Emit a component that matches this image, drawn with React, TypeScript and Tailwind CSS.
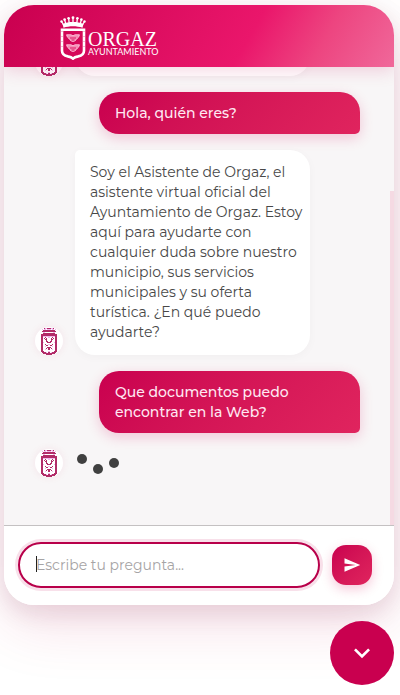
import type { ReactNode } from "react";

const AVATAR_ROWS = [
  "...#oo####oo#...",
  ".o.oo.oooo.oo.o.",
  "..############..",
  ".##############.",
  "..oo........oo..",
  "..############..",
  "################",
  "################",
  "##oooooooooooo##",
  "##..#..oo..#..##",
  "##.#.#....#.#.##",
  "##..##....##..##",
  "##...#....#...##",
  "##...##..##...##",
  "##o...####...o##",
  "##............##",
  "##..#..oo..#..##",
  "##...##..##...##",
  "##..o......o..##",
  "##....####....##",
  "##...#.##.#...##",
  "##..o..##..o..##",
  "##............##",
  "###....oo....###",
  ".####o.##.o####.",
  "..############..",
  ".....######.....",
];

function Avatar() {
  return (
    <div className="flex size-7 shrink-0 items-center justify-center rounded-full bg-white shadow-[0_0_8px_rgba(200,0,80,0.08)]">
      <svg width="16" height="27" viewBox="0 0 16 27" shapeRendering="crispEdges" role="img" aria-label="Asistente">
        {AVATAR_ROWS.flatMap((row, y) =>
          row.split("").map((c, x) =>
            c === "." ? null : (
              <rect key={`${x}-${y}`} x={x} y={y} width="1" height="1" fill={c === "#" ? "#b22c68" : "#f2b9ec"} />
            ),
          ),
        )}
      </svg>
    </div>
  );
}

function UserMessage({ children }: { children: ReactNode }) {
  return (
    <p className="ml-[68px] rounded-[20px] rounded-br-[5px] bg-linear-135 from-[#c9004f] to-[#e0245e] px-4 py-[11px] font-medium text-[#ffe8f2] shadow-[0_4px_14px_rgba(214,0,84,0.2)]">
      {children}
    </p>
  );
}

function BotMessage({ children }: { children?: ReactNode }) {
  return (
    <div className="flex items-end gap-3 pl-1">
      <Avatar />
      <p className="min-h-11 w-[235px] rounded-[20px] rounded-tl-[5px] bg-white pt-3 pr-1 pb-[13px] pl-[15px] text-[#484848] shadow-[0_2px_10px_rgba(0,0,0,0.03)]">
        {children}
      </p>
    </div>
  );
}

function Crest() {
  return (
    <svg width="26" height="44" viewBox="0 0 26 44" fill="none" aria-hidden="true">
      <g fill="#fff">
        <circle cx="1.5" cy="5.5" r="1.2" />
        <circle cx="4.6" cy="3.6" r="1.3" />
        <circle cx="8.6" cy="2.3" r="1.3" />
        <circle cx="13" cy="1.7" r="1.4" />
        <circle cx="17.4" cy="2.3" r="1.3" />
        <circle cx="21.4" cy="3.6" r="1.3" />
        <circle cx="24.5" cy="5.5" r="1.2" />
        <path d="M2.5 8c6.500-2.600 14.500-2.600 21 0l-1 3.800c-6-2-13-2-19 0z" />
      </g>
      <path
        d="M1.5 5.5 4 9.5M4.6 3.6 6 8.5M8.6 2.3l.7 5.5M13 1.7v6M17.4 2.3l-.7 5.5M21.4 3.6 20 8.5M24.5 5.5 22 9.5"
        stroke="#fff"
        strokeWidth="1.3"
      />
      <path
        d="M2 13.800h22v20.900c0 3.200-2.200 5-5.800 5.700-2.400.4-4 1-5.200 2.300-1.200-1.300-2.800-1.900-5.200-2.300-3.600-.7-5.800-2.500-5.800-5.700z"
        stroke="#fff"
        strokeWidth="2.600"
      />
      <path d="M2 15v19.700M24 15v19.700" stroke="#dd4c86" strokeWidth="0.700" strokeDasharray="1 4" />
      <g fill="#f48db5" stroke="#ffc4dc" strokeWidth="0.900">
        <path d="M6.500 18.800h4.500l2 1 2-1h4.500l-1 2.400c-1.500.6-2.500 4.200-5.500 4.200s-4-3.600-5.500-4.200z" />
        <path d="M6.500 28.800h4.500l2 1 2-1h4.500l-1 2.400c-1.500.6-2.500 4.200-5.500 4.200s-4-3.600-5.500-4.200z" />
      </g>
      <path d="M10 22h6M11.500 24h3M10 32h6M11.500 34h3" stroke="#d8105f" strokeWidth="0.900" />
    </svg>
  );
}

export default function App() {
  return (
    <div className="flex h-screen flex-col overflow-hidden bg-white pt-[5px] pr-1.5 pb-2.5 pl-1 font-['Montserrat','Inter',sans-serif] text-[14px] leading-5">
      <main className="flex min-h-0 flex-1 flex-col overflow-hidden rounded-[30px] bg-white shadow-[0_20px_60px_rgba(200,0,80,0.13),0_8px_25px_rgba(70,20,40,0.12)]">
        <header className="relative z-10 flex h-[62px] shrink-0 items-center gap-0.5 bg-linear-[120deg,#c9004f_0%,#ea166b_62%,#ed4580_80%,#f0689a_100%] pl-14 text-white shadow-[0_4px_16px_rgba(200,0,80,0.16)]">
          <div className="pt-1">
            <Crest />
          </div>
          <h1 className="pt-4">
            <span className="block font-['Liberation_Serif',serif] text-[20px] leading-[14px]">ORGAZ</span>
            <span className="block font-['Lato',sans-serif] text-[9px] leading-[11px]">AYUNTAMIENTO</span>
          </h1>
        </header>

        <section aria-label="Conversación" className="flex min-h-0 flex-1 bg-[#f8f6f7]">
          <div className="flex min-w-0 flex-1 flex-col justify-end gap-4 overflow-hidden pr-[30px] pb-12 pl-[27px]">
            <BotMessage />
            <UserMessage>Hola, quién eres?</UserMessage>
            <BotMessage>
              Soy el Asistente de Orgaz, el asistente virtual oficial del Ayuntamiento de Orgaz. Estoy aquí para
              ayudarte con cualquier duda sobre nuestro municipio, sus servicios municipales y su oferta turística. ¿En
              qué puedo ayudarte?
            </BotMessage>
            <UserMessage>Que documentos puedo encontrar en la Web?</UserMessage>
            <div className="flex items-center gap-3 pl-1">
              <Avatar />
              <svg width="46" height="28" viewBox="0 0 46 28" fill="#404040" role="img" aria-label="Escribiendo">
                <circle cx="7" cy="10" r="5" />
                <circle cx="23" cy="20" r="5" />
                <circle cx="39" cy="14" r="5" />
              </svg>
            </div>
          </div>
          <div className="flex w-1 flex-col justify-end">
            <div className="h-[73%] bg-[#f5dae3]" />
          </div>
        </section>

        <form
          className="flex shrink-0 items-center gap-3 border-t border-[#c4c1c2] bg-white pt-4 pr-[22px] pb-[17px] pl-3.5"
          onSubmit={(e) => e.preventDefault()}
        >
          <div className="relative min-w-0 flex-1">
            <input
              type="text"
              aria-label="Escribe tu pregunta"
              placeholder="Escribe tu pregunta..."
              className="block h-[46px] w-full rounded-full border-2 border-[#b8004a] bg-white px-4 text-[14px] text-[#484848] shadow-[0_0_0_3px_rgba(200,0,80,0.12)] outline-none placeholder:text-[#a6a4a5]"
            />
            <span className="absolute top-3.5 left-[18px] h-4 w-px bg-[#222]" />
          </div>
          <button
            type="submit"
            aria-label="Enviar"
            className="flex size-10 items-center justify-center rounded-[14px] bg-linear-135 from-[#c9004f] to-[#e0245e] text-white shadow-[0_4px_12px_rgba(214,0,84,0.22)]"
          >
            <svg width="18" height="18" viewBox="0 0 24 24" fill="currentColor" aria-hidden="true">
              <path d="M2.010 21 23 12 2.010 3 2 10l15 2-15 2z" />
            </svg>
          </button>
        </form>
      </main>

      <button
        type="button"
        aria-label="Cerrar chat"
        className="relative mt-4 flex size-16 shrink-0 items-center justify-center self-end rounded-full bg-[#c9004f] text-white"
      >
        <svg width="32" height="32" viewBox="0 0 24 24" fill="currentColor" aria-hidden="true">
          <path d="M7.410 8.590 12 13.170l4.590-4.580L18 10l-6 6-6-6z" />
        </svg>
      </button>
    </div>
  );
}
